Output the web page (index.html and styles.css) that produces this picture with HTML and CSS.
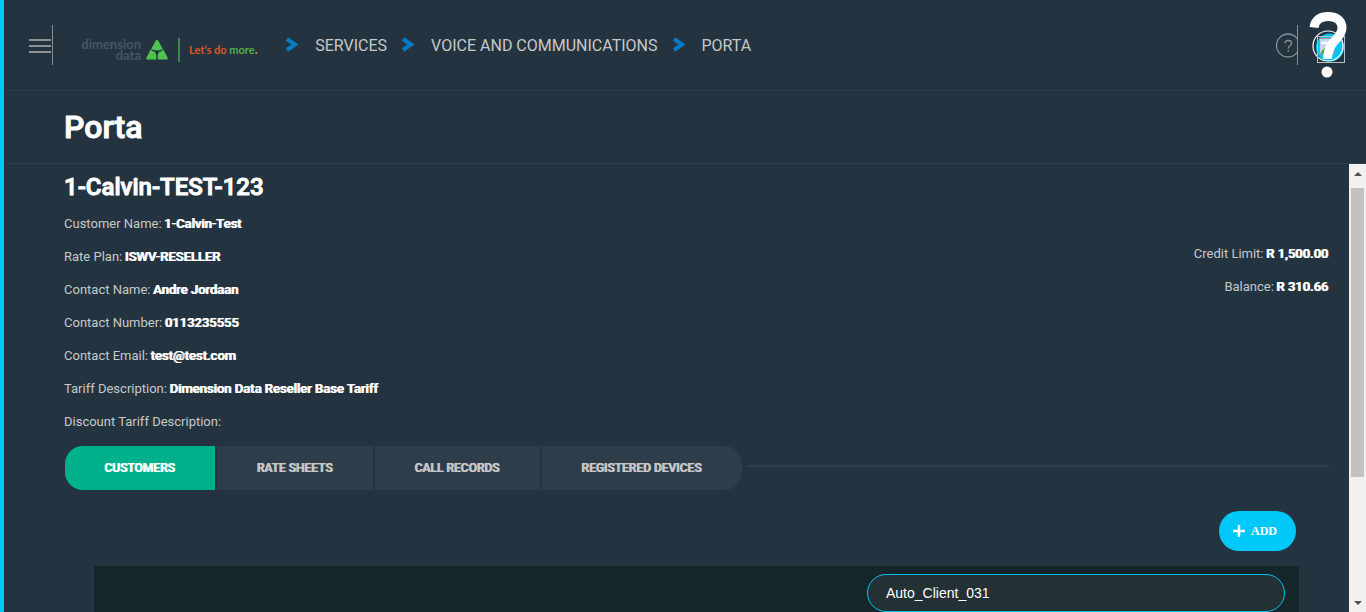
FILE: index.html
```html
<!DOCTYPE html>
<html lang="en">
<head>
<meta charset="utf-8">
<meta name="viewport" content="width=device-width, initial-scale=1">
<title>Porta</title>
<link rel="stylesheet" href="styles.css">
</head>
<body>
<header class="topbar">
  <button class="menu-button" type="button" aria-label="Menu"><span></span><span></span><span></span></button>
  <a class="logo" href="#" aria-label="Home">
    <span class="logo-name"><span>dimension</span><span>data</span></span>
    <svg class="logo-mark" width="22" height="20" viewBox="0 0 22 20" aria-hidden="true">
      <path fill="#4fc34f" d="M11 0Q12 0 12.500 1L16.800 9Q14 10.500 11 10.500T5.200 9L9.500 1Q10 0 11 0ZM4.700 9.500Q7 11.500 9 12L10.300 15V19.500H1Q0 19.500 .3 18ZM17.300 9.500Q15 11.500 13 12L11.700 15V19.500H21Q22 19.500 21.700 18Z"/>
    </svg>
    <span class="logo-tag">Let’s do <em>more</em><b>.</b></span>
  </a>
  <nav class="crumbs" aria-label="Breadcrumb">
    <svg class="chevron" width="14" height="16" viewBox="0 0 14 16" aria-hidden="true"><path d="M2 2L10 7.500L2 13"/></svg>
    <a href="#">SERVICES</a>
    <svg class="chevron" width="14" height="16" viewBox="0 0 14 16" aria-hidden="true"><path d="M2 2L10 7.500L2 13"/></svg>
    <a href="#">VOICE AND COMMUNICATIONS</a>
    <svg class="chevron" width="14" height="16" viewBox="0 0 14 16" aria-hidden="true"><path d="M2 2L10 7.500L2 13"/></svg>
    <a href="#">PORTA</a>
  </nav>
  <button class="help-button" type="button" aria-label="Help">
    <svg width="22" height="40" viewBox="0 0 22 40" aria-hidden="true">
      <g fill="none" stroke="#8b9297" stroke-width="1.300"><circle cx="12" cy="20.500" r="11.500"/><path d="M9 18.500Q9 15.500 12.300 15.500T15.500 18Q15.500 19.500 14 20.700T12.300 23.500M12.300 25V26.500"/></g>
      <path d="M21.500 0V40" stroke="#8b8b8b"/>
    </svg>
  </button>
  <button class="avatar" type="button" aria-label="Account">
    <svg width="40" height="68" viewBox="0 0 40 68" aria-hidden="true">
      <circle cx="21" cy="36.500" r="14" fill="#00c3f5"/>
      <path d="M10.500 27.500H21L25 31V43H10.500Z" fill="#c4d7f2" stroke="#999"/>
      <path d="M11 43Q14 37 18 36T24 43Z" fill="#55a544"/>
      <path d="M12 33Q12 30 15 31Q18 29 19 33Z" fill="#fff"/>
      <circle cx="19" cy="35" r="15" fill="none" stroke="#fff" stroke-width="1.200"/>
      <rect x="8.500" y="25.500" width="27" height="26" fill="none" stroke="#b9bec1"/>
      <path d="M5 16.500C6 8.500 12 5.500 19 5.500C28 5.500 33 10 33 17C33 28 19 29 18.500 48" fill="none" stroke="#fff" stroke-width="9"/>
      <circle cx="18" cy="61" r="5.500" fill="#fff"/>
    </svg>
  </button>
</header>
<div class="page-title"><h1>Porta</h1></div>
<div class="viewport">
  <main class="content">
    <h2>1-Calvin-TEST-123</h2>
    <section class="account">
      <ul class="details">
        <li>Customer Name: <strong>1-Calvin-Test</strong></li>
        <li>Rate Plan: <strong>ISWV-RESELLER</strong></li>
        <li>Contact Name: <strong>Andre Jordaan</strong></li>
        <li>Contact Number: <strong>0113235555</strong></li>
        <li>Contact Email: <strong>test@test.com</strong></li>
        <li>Tariff Description: <strong>Dimension Data Reseller Base Tariff</strong></li>
        <li>Discount Tariff Description:</li>
      </ul>
      <ul class="details balances">
        <li>Credit Limit: <strong>R 1,500.00</strong></li>
        <li>Balance: <strong>R 310.66</strong></li>
      </ul>
    </section>
    <div class="tab-row">
      <div class="tabs" role="tablist">
        <button class="tab active" type="button" role="tab" aria-selected="true">CUSTOMERS</button>
        <button class="tab" type="button" role="tab" aria-selected="false">RATE SHEETS</button>
        <button class="tab" type="button" role="tab" aria-selected="false">CALL RECORDS</button>
        <button class="tab" type="button" role="tab" aria-selected="false">REGISTERED DEVICES</button>
      </div>
      <div class="tab-line"></div>
    </div>
    <div class="actions">
      <button class="add-button" type="button"><svg width="12" height="12" viewBox="0 0 12 12" aria-hidden="true"><path d="M6 0V12M0 6H12" stroke="#fff" stroke-width="2.400"/></svg>ADD</button>
    </div>
    <div class="panel"><input class="search" type="text" aria-label="Search customers" value="Auto_Client_031"></div>
  </main>
  <div class="scrollbar" aria-hidden="true">
    <svg width="8" height="4" viewBox="0 0 8 4"><path d="M4 0L8 4H0Z" fill="#505050"/></svg>
    <div class="track"><div class="thumb"></div></div>
    <svg width="8" height="4" viewBox="0 0 8 4"><path d="M0 0H8L4 4Z" fill="#505050"/></svg>
  </div>
</div>
</body>
</html>
```
FILE: styles.css
```css
* { box-sizing: border-box; }
body {
  margin: 0;
  height: 100vh;
  display: flex;
  flex-direction: column;
  overflow: hidden;
  border-left: 4px solid #00c8f8;
  background: #233440;
  color: #c8c8c8;
  font: 13px/17px Roboto, sans-serif;
}
button { border: 0; padding: 0; background: none; cursor: pointer; }
a { color: inherit; text-decoration: none; }
h1, h2 { font-weight: 500; -webkit-text-stroke: 1px currentColor; }
strong, .tab { font-weight: 500; text-shadow: -1px 0 currentColor; }
.topbar {
  flex: none;
  display: flex;
  align-items: center;
  height: 91px;
  padding: 0 17px 0 25px;
  border-bottom: 1px solid #2d3e4a;
}
.menu-button {
  display: flex;
  flex-direction: column;
  justify-content: center;
  gap: 4px;
  width: 24px;
  height: 40px;
  padding: 2px 1px 0 0;
  border-right: 1px solid #8b8b8b;
}
.menu-button span { height: 2px; background: #8b9093; }
.logo { display: flex; align-items: center; margin: 10px 0 0 28px; }
.logo-name {
  display: flex;
  flex-direction: column;
  align-items: flex-end;
  width: 60px;
  color: #435563;
  font: 700 13px/11px Lato, sans-serif;
}
.logo-mark { margin: 0 10px 0 5px; }
.logo-tag {
  padding-left: 9px;
  border-left: 2px solid #3f8550;
  color: #e2521d;
  font: 700 11px/24px Lato, sans-serif;
}
.logo-tag em { color: #4fb04c; font-style: normal; }
.logo-tag b { color: #f0a51d; }
.crumbs { display: flex; align-items: center; font-size: 16px; margin-left: 28px; }
.crumbs a { margin: 0 14px 0 16px; }
.chevron path { fill: none; stroke: #047bc4; stroke-width: 4; }
.help-button { display: flex; margin-left: auto; }
.avatar { display: flex; margin: 0 0 0 11px; }
.page-title { flex: none; height: 73px; padding: 16px 60px; border-bottom: 1px solid #2d3e4a; }
h1 { margin: 0; color: #fff; font-size: 32px; line-height: 40px; }
.viewport { flex: 1; display: flex; min-height: 0; }
.content { flex: 1; min-width: 0; overflow: hidden; padding: 8px 20px 0 60px; }
h2 { margin: 0 0 12px; color: #fff; font-size: 24px; line-height: 31px; }
.account { display: flex; justify-content: space-between; }
.details { display: flex; flex-direction: column; gap: 16px; margin: 0; padding: 0; list-style: none; }
.balances { padding-top: 30px; text-align: right; }
strong { color: #fff; }
.tab-row { display: flex; align-items: center; gap: 4px; margin: 16px 0 0 1px; }
.tabs { display: flex; gap: 2px; border-radius: 18px; overflow: hidden; }
.tab { padding: 0 40px; background: #2d3e4a; color: #c8c8c8; font-family: Roboto, sans-serif; font-size: 12px; line-height: 44px; }
.tab.active { background: #00b18b; color: #fff; }
.tab-line { flex: 1; height: 2px; margin-bottom: 4px; background: #2d3e4a; }
.actions { display: flex; justify-content: flex-end; padding: 21px 33px 15px 0; }
.add-button {
  display: flex;
  align-items: center;
  gap: 6px;
  height: 40px;
  padding: 0 19px 0 14px;
  border-radius: 20px;
  background: #00c8f8;
  color: #fff;
  font: 700 12px/40px "Liberation Serif", serif;
}
.panel { display: flex; justify-content: flex-end; margin: 0 30px; padding: 8px 14px 40px; background: #15262a; }
.search {
  width: 418px;
  height: 38px;
  padding: 0 18px;
  border: 1px solid #00c3f5;
  border-radius: 19px;
  outline: 0;
  background: #233135;
  color: #fff;
  font: 14px "Liberation Sans", sans-serif;
}
.scrollbar {
  flex: none;
  display: flex;
  flex-direction: column;
  align-items: center;
  gap: 12px;
  width: 17px;
  padding: 8px 0 7px;
  background: #f1f1f1;
}
.track { flex: 1; width: 13px; }
.thumb { height: 72%; background: #c1c1c1; }
```
